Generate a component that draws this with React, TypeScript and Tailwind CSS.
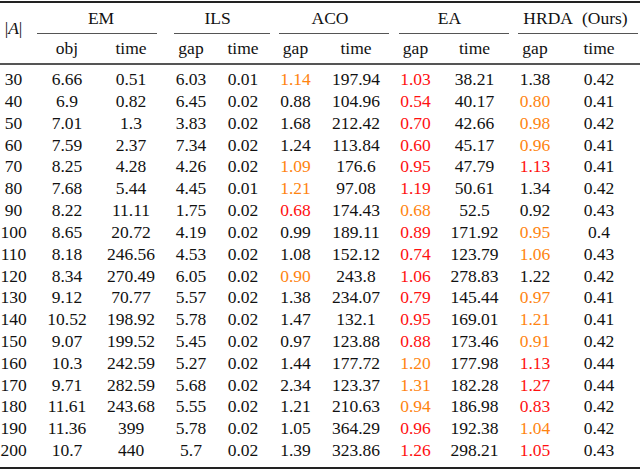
import React from "react";

type Cell = [string, "o" | "r" | ""];

const O = "o" as const;
const R = "r" as const;
const N = "" as const;

const rows: [string, string, string, string, string, Cell, string, Cell, string, Cell, string][] = [
  ["30", "6.66", "0.51", "6.03", "0.01", ["1.14", O], "197.94", ["1.03", R], "38.21", ["1.38", N], "0.42"],
  ["40", "6.9", "0.82", "6.45", "0.02", ["0.88", N], "104.96", ["0.54", R], "40.17", ["0.80", O], "0.41"],
  ["50", "7.01", "1.3", "3.83", "0.02", ["1.68", N], "212.42", ["0.70", R], "42.66", ["0.98", O], "0.42"],
  ["60", "7.59", "2.37", "7.34", "0.02", ["1.24", N], "113.84", ["0.60", R], "45.17", ["0.96", O], "0.41"],
  ["70", "8.25", "4.28", "4.26", "0.02", ["1.09", O], "176.6", ["0.95", R], "47.79", ["1.13", R], "0.41"],
  ["80", "7.68", "5.44", "4.45", "0.01", ["1.21", O], "97.08", ["1.19", R], "50.61", ["1.34", N], "0.42"],
  ["90", "8.22", "11.11", "1.75", "0.02", ["0.68", R], "174.43", ["0.68", O], "52.5", ["0.92", N], "0.43"],
  ["100", "8.65", "20.72", "4.19", "0.02", ["0.99", N], "189.11", ["0.89", R], "171.92", ["0.95", O], "0.4"],
  ["110", "8.18", "246.56", "4.53", "0.02", ["1.08", N], "152.12", ["0.74", R], "123.79", ["1.06", O], "0.43"],
  ["120", "8.34", "270.49", "6.05", "0.02", ["0.90", O], "243.8", ["1.06", R], "278.83", ["1.22", N], "0.42"],
  ["130", "9.12", "70.77", "5.57", "0.02", ["1.38", N], "234.07", ["0.79", R], "145.44", ["0.97", O], "0.41"],
  ["140", "10.52", "198.92", "5.78", "0.02", ["1.47", N], "132.1", ["0.95", R], "169.01", ["1.21", O], "0.41"],
  ["150", "9.07", "199.52", "5.45", "0.02", ["0.97", N], "123.88", ["0.88", R], "173.46", ["0.91", O], "0.42"],
  ["160", "10.3", "242.59", "5.27", "0.02", ["1.44", N], "177.72", ["1.20", O], "177.98", ["1.13", R], "0.44"],
  ["170", "9.71", "282.59", "5.68", "0.02", ["2.34", N], "123.37", ["1.31", O], "182.28", ["1.27", R], "0.44"],
  ["180", "11.61", "243.68", "5.55", "0.02", ["1.21", N], "210.63", ["0.94", O], "186.98", ["0.83", R], "0.42"],
  ["190", "11.36", "399", "5.78", "0.02", ["1.05", N], "364.29", ["0.96", R], "192.38", ["1.04", O], "0.42"],
  ["200", "10.7", "440", "5.7", "0.02", ["1.39", N], "323.86", ["1.26", R], "298.21", ["1.05", R], "0.43"],
];

function C({ c }: { c: Cell }) {
  const cls =
    c[1] === "o" ? "text-[#ff8410]" : c[1] === "r" ? "text-[#ff1010]" : "";
  return <div className={"text-center whitespace-nowrap " + cls}>{c[0]}</div>;
}

function T({ v }: { v: string }) {
  return <div className="text-center whitespace-nowrap">{v}</div>;
}

export default function App() {
  return (
    <div className="w-[640px] h-[470px] bg-white text-[#111] font-['Liberation_Serif'] text-[17.5px] leading-[21.8px] overflow-hidden">
      <div className="mt-[1px] h-[2px] bg-[#222]" />
      <div className="flex">
        <div className="w-[37px] pt-[15px] pr-[10px] flex justify-center whitespace-nowrap">
          <span>
            |<i>A</i>|
          </span>
        </div>
        <div className="flex-1 flex flex-col">
          <div className="flex pt-[5px]">
            <div className="w-[120px] flex flex-col">
              <div className="text-center pl-[8px]">EM</div>
              <div className="mt-[3px] h-[1px] bg-[#555]" />
            </div>
            <div className="w-[96px] ml-[17px] flex flex-col">
              <div className="text-center pr-[9px]">ILS</div>
              <div className="mt-[3px] h-[1px] bg-[#555]" />
            </div>
            <div className="w-[110px] ml-[9px] flex flex-col">
              <div className="text-center pr-[8px]">ACO</div>
              <div className="mt-[3px] h-[1px] bg-[#555]" />
            </div>
            <div className="w-[110px] ml-[10px] flex flex-col">
              <div className="text-center pr-[9px]">EA</div>
              <div className="mt-[3px] h-[1px] bg-[#555]" />
            </div>
            <div className="w-[120px] ml-[9px] flex flex-col">
              <div className="text-center pr-[5px] whitespace-nowrap">
                HRDA<span className="ml-[9px]">(Ours)</span>
              </div>
              <div className="mt-[3px] h-[1px] bg-[#555]" />
            </div>
          </div>
          <div className="grid grid-cols-[60px_68px_52px_52px_53px_68px_51px_67px_54px_74px_1fr] pt-[4px]">
            <T v="obj" />
            <T v="time" />
            <T v="gap" />
            <T v="time" />
            <T v="gap" />
            <T v="time" />
            <T v="gap" />
            <T v="time" />
            <T v="gap" />
            <T v="time" />
            <div />
          </div>
        </div>
      </div>
      <div className="mt-[3px] h-[2px] bg-[#555]" />
      <div className="mt-[4.6px] flex flex-col leading-[21.82px]">
        {rows.map((r) => (
          <div
            key={r[0]}
            className="grid grid-cols-[37px_60px_68px_52px_52px_53px_68px_51px_67px_54px_74px_1fr]"
          >
            <div className="pr-[10px] text-center whitespace-nowrap">{r[0]}</div>
            <T v={r[1]} />
            <T v={r[2]} />
            <T v={r[3]} />
            <T v={r[4]} />
            <C c={r[5]} />
            <T v={r[6]} />
            <C c={r[7]} />
            <T v={r[8]} />
            <C c={r[9]} />
            <T v={r[10]} />
            <div />
          </div>
        ))}
      </div>
      <div className="mt-[5px] h-[2px] bg-[#222]" />
    </div>
  );
}
